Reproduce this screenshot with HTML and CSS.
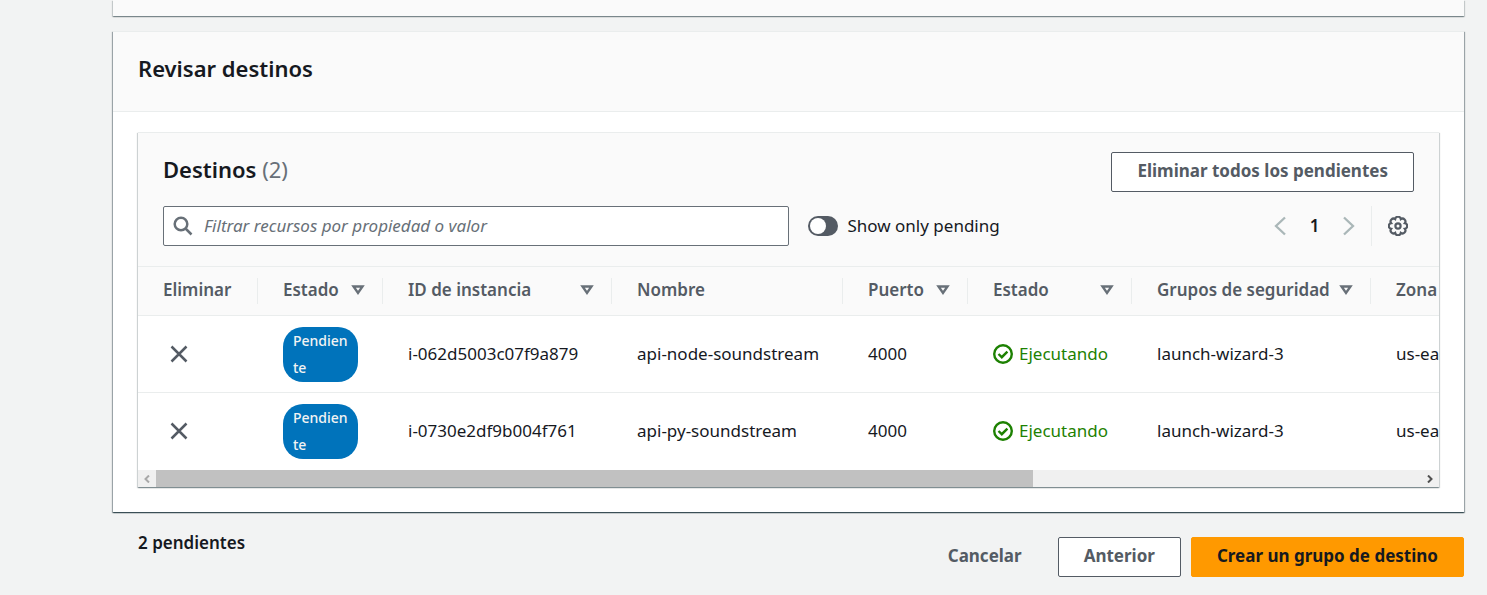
FILE: index.html
```html
<!DOCTYPE html>
<html lang="es">
<head>
<meta charset="utf-8">
<meta name="viewport" content="width=device-width, initial-scale=1">
<title>Crear un grupo de destino</title>
<link rel="stylesheet" href="styles.css">
</head>
<body>
<svg class="sprite" aria-hidden="true">
  <symbol id="sort" viewBox="0 0 14 12"><path d="M2.500 2.500h9L7 9z" fill="none" stroke="currentColor" stroke-width="2.400"/></symbol>
  <symbol id="close" viewBox="0 0 20 20"><path d="M2.500 2.500l15 15M17.500 2.500l-15 15" fill="none" stroke="currentColor" stroke-width="2.500"/></symbol>
  <symbol id="check" viewBox="0 0 20 20"><circle cx="10" cy="10" r="8.800" fill="none" stroke="currentColor" stroke-width="2.400"/><path d="M5.500 10l3.300 3.200 5.600-5.600" fill="none" stroke="currentColor" stroke-width="2.400"/></symbol>
</svg>
<main class="page">
  <div class="card card-previous"></div>

  <section class="card">
    <header class="card-header"><h2 class="title">Revisar destinos</h2></header>
    <div class="card-body">
      <section class="panel">
        <header class="panel-header">
          <div class="bar">
            <h3 class="title">Destinos <span class="counter">(2)</span></h3>
            <button class="btn" type="button">Eliminar todos los pendientes</button>
          </div>
          <div class="bar tools">
            <div class="search">
              <svg class="search-icon" viewBox="0 0 20 20" aria-hidden="true"><circle cx="8" cy="8" r="6.300" fill="none" stroke="currentColor" stroke-width="2.500"/><path d="M12.500 12.500l6 6" stroke="currentColor" stroke-width="2.500"/></svg>
              <input class="search-input" type="text" placeholder="Filtrar recursos por propiedad o valor" aria-label="Filtrar recursos">
            </div>
            <label class="toggle-label"><input class="toggle" type="checkbox" role="switch">Show only pending</label>
            <nav class="pagination" aria-label="Paginación">
              <button class="icon-btn arrow" type="button" aria-label="Página anterior"><svg class="icon" viewBox="0 0 20 20"><path d="M15 1.500L6 10l9 8.500" fill="none" stroke="currentColor" stroke-width="2.300"/></svg></button>
              <button class="page-number" type="button" aria-current="page">1</button>
              <button class="icon-btn arrow" type="button" aria-label="Página siguiente"><svg class="icon" viewBox="0 0 20 20"><path d="M5 1.500l9 8.500-9 8.500" fill="none" stroke="currentColor" stroke-width="2.300"/></svg></button>
            </nav>
            <div class="settings">
              <button class="icon-btn" type="button" aria-label="Preferencias"><svg class="icon" viewBox="0 0 20 20"><path d="M7.170 3.160A2.870 2.870 0 0 1 12.830 3.160A2.870 2.870 0 0 1 16.840 7.170A2.870 2.870 0 0 1 16.840 12.830A2.870 2.870 0 0 1 12.830 16.840A2.870 2.870 0 0 1 7.170 16.840A2.870 2.870 0 0 1 3.160 12.830A2.870 2.870 0 0 1 3.160 7.170A2.870 2.870 0 0 1 7.170 3.160Z" fill="none" stroke="currentColor" stroke-width="2.200"/><circle cx="10" cy="10" r="2.600" fill="none" stroke="currentColor" stroke-width="2.200"/></svg></button>
            </div>
          </div>
        </header>

        <div class="table-wrap">
          <table class="table">
            <colgroup><col class="c-remove"><col class="c-small"><col class="c-id"><col class="c-name"><col class="c-small"><col class="c-state"><col class="c-group"><col></colgroup>
            <thead>
              <tr>
                <th scope="col">Eliminar</th>
                <th scope="col"><button class="sort" type="button">Estado<svg class="sort-icon"><use href="#sort"/></svg></button></th>
                <th scope="col"><button class="sort" type="button">ID de instancia<svg class="sort-icon"><use href="#sort"/></svg></button></th>
                <th scope="col">Nombre</th>
                <th scope="col"><button class="sort" type="button">Puerto<svg class="sort-icon"><use href="#sort"/></svg></button></th>
                <th scope="col"><button class="sort" type="button">Estado<svg class="sort-icon"><use href="#sort"/></svg></button></th>
                <th scope="col"><button class="sort" type="button">Grupos de seguridad<svg class="sort-icon"><use href="#sort"/></svg></button></th>
                <th scope="col">Zona</th>
              </tr>
            </thead>
            <tbody>
              <tr>
                <td><button class="icon-btn remove" type="button" aria-label="Eliminar api-node-soundstream"><svg class="icon"><use href="#close"/></svg></button></td>
                <td><span class="badge">Pendiente</span></td>
                <td>i-062d5003c07f9a879</td>
                <td>api-node-soundstream</td>
                <td>4000</td>
                <td><span class="status"><svg class="icon"><use href="#check"/></svg>Ejecutando</span></td>
                <td>launch-wizard-3</td>
                <td>us-ea</td>
              </tr>
              <tr>
                <td><button class="icon-btn remove" type="button" aria-label="Eliminar api-py-soundstream"><svg class="icon"><use href="#close"/></svg></button></td>
                <td><span class="badge">Pendiente</span></td>
                <td>i-0730e2df9b004f761</td>
                <td>api-py-soundstream</td>
                <td>4000</td>
                <td><span class="status"><svg class="icon"><use href="#check"/></svg>Ejecutando</span></td>
                <td>launch-wizard-3</td>
                <td>us-ea</td>
              </tr>
            </tbody>
          </table>
        </div>
        <div class="scrollbar">
          <button class="scroll-btn off" type="button" aria-label="Desplazar a la izquierda"><svg class="scroll-icon" viewBox="0 0 8 8"><path d="M6 .5L2.500 4 6 7.500" fill="none" stroke="currentColor" stroke-width="2"/></svg></button>
          <div class="track"><div class="thumb"></div></div>
          <button class="scroll-btn" type="button" aria-label="Desplazar a la derecha"><svg class="scroll-icon" viewBox="0 0 8 8"><path d="M2 .5L5.500 4 2 7.500" fill="none" stroke="currentColor" stroke-width="2"/></svg></button>
        </div>
      </section>
    </div>
  </section>

  <footer class="footer">
    <p class="pending">2 pendientes</p>
    <div class="actions">
      <button class="btn link" type="button">Cancelar</button>
      <button class="btn" type="button">Anterior</button>
      <button class="btn primary" type="button">Crear un grupo de destino</button>
    </div>
  </footer>
</main>
</body>
</html>
```

FILE: styles.css
```css
* { box-sizing: border-box; }

body {
  margin: 0;
  background: #f2f3f3;
  color: #16191f;
  font: 17px/28px "Noto Sans", "Open Sans", sans-serif;
}

button, input { font: inherit; color: inherit; margin: 0; }
button { padding: 0; border: 0; background: none; cursor: pointer; }
.sprite { position: absolute; width: 0; height: 0; }
.page { padding: 0 23px 0 113px; }

.card {
  margin-bottom: 25px;
  background: #fff;
  border-top: 1px solid #eaeded;
  box-shadow: 0 1px 1px 0 rgba(0, 28, 36, .5), 1px 1px 1px 0 rgba(0, 28, 36, .3), -1px 1px 1px 0 rgba(0, 28, 36, .3);
}

.card-previous {
  height: 16px;
  margin-bottom: 15px;
  border-top: 0;
  background: #fafafa;
  box-shadow: 0 1px 1px 0 rgba(0, 28, 36, .3), 1px 1px 1px 0 rgba(0, 28, 36, .15), -1px 1px 1px 0 rgba(0, 28, 36, .15);
}

.card-header {
  padding: 21px 25px 28px;
  background: #fafafa;
  border-bottom: 1px solid #eaeded;
}

.title { margin: 0; font-size: 22px; line-height: 30px; font-weight: 600; }
.counter { color: #687078; font-weight: 400; }
.card-body { padding: 20px 25px 25px; }

.panel {
  border-top: 1px solid #eaeded;
  box-shadow: 0 1px 1px 0 rgba(0, 28, 36, .3), 1px 1px 1px 0 rgba(0, 28, 36, .15), -1px 1px 1px 0 rgba(0, 28, 36, .15);
}

.panel-header { padding: 19px 25px 20px; background: #fafafa; }
.bar { display: flex; align-items: center; justify-content: space-between; }
.bar .title { padding-bottom: 6px; }
.tools { margin-top: 14px; }

.btn {
  height: 40px;
  padding: 0 25px 2px;
  border: 1px solid #545b64;
  border-radius: 2px;
  background: #fff;
  color: #545b64;
  font-weight: 700;
  line-height: 24px;
  white-space: nowrap;
}
.btn.link { border-color: transparent; background: none; }
.btn.primary { background: #f90; border-color: #f90; color: #16191f; }

.search {
  display: flex;
  align-items: center;
  gap: 11px;
  width: 50%;
  height: 40px;
  padding: 0 9px;
  border: 1px solid #687078;
  border-radius: 2px;
  background: #fff;
}
.search-icon { flex: none; width: 20px; height: 20px; color: #687078; }
.search-input { flex: 1; min-width: 0; padding: 0; border: 0; background: none; outline: 0; }
.search-input::placeholder { color: #687078; font-style: italic; opacity: 1; }

.toggle-label { display: flex; align-items: center; gap: 10px; margin: 0 auto 0 19px; }
.toggle {
  appearance: none;
  display: flex;
  align-items: center;
  width: 30px;
  height: 20px;
  padding: 0 2px;
  border-radius: 10px;
  background: #545b64;
}
.toggle::before { content: ""; width: 16px; height: 16px; border-radius: 50%; background: #fff; }
.toggle:checked { justify-content: flex-end; background: #0073bb; }

.icon-btn { display: flex; color: #545b64; }
.icon { display: block; flex: none; width: 20px; height: 20px; }
.pagination { display: flex; align-items: center; gap: 15px; padding-right: 12px; }
.arrow { color: #aab7b8; }
.page-number { width: 19px; font-weight: 600; }
.settings { display: flex; align-items: center; height: 40px; padding: 0 6px 0 16px; border-left: 1px solid #eaeded; }

.table-wrap { overflow: hidden; }
.table { width: 1877px; table-layout: fixed; border-collapse: separate; border-spacing: 0; }
.c-remove { width: 120px; }
.c-small { width: 125px; }
.c-id { width: 229px; }
.c-name { width: 231px; }
.c-state { width: 164px; }
.c-group { width: 239px; }

th {
  height: 50px;
  padding: 0 18px 2px 25px;
  border: solid #eaeded;
  border-width: 1px 0;
  background: linear-gradient(#eaeded, #eaeded) right center / 1px 26px no-repeat #fafafa;
  color: #545b64;
  font-weight: 600;
  text-align: left;
  white-space: nowrap;
}
.sort { display: flex; align-items: center; justify-content: space-between; width: 100%; }
.sort-icon { flex: none; width: 14px; height: 12px; color: #687078; }

td { height: 77px; padding: 0 25px; white-space: nowrap; border-bottom: 1px solid #eaeded; }
tbody tr:last-child td { border-bottom-color: transparent; }
.remove { padding-left: 6px; }
.badge {
  display: block;
  padding: 0 10px 1px;
  border-radius: 20px;
  background: #0073bb;
  color: #f2f3f3;
  font-size: 14px;
  font-weight: 500;
  line-height: 27px;
  white-space: normal;
  overflow-wrap: anywhere;
}
.status { display: flex; align-items: center; gap: 6px; color: #1d8102; }

.scrollbar { display: flex; height: 17px; background: #f0f0f0; }
.scroll-btn { display: flex; align-items: center; justify-content: center; width: 18px; color: #505050; }
.scroll-btn.off { color: #a8a8a8; }
.scroll-icon { width: 8px; height: 8px; }
.track { flex: 1; }
.thumb { width: 69.300%; height: 100%; background: #c1c1c1; }

.footer { display: flex; justify-content: space-between; padding-left: 25px; }
.pending { margin: -8px 0 0; font-weight: 600; }
.actions { display: flex; gap: 10px; }
```
